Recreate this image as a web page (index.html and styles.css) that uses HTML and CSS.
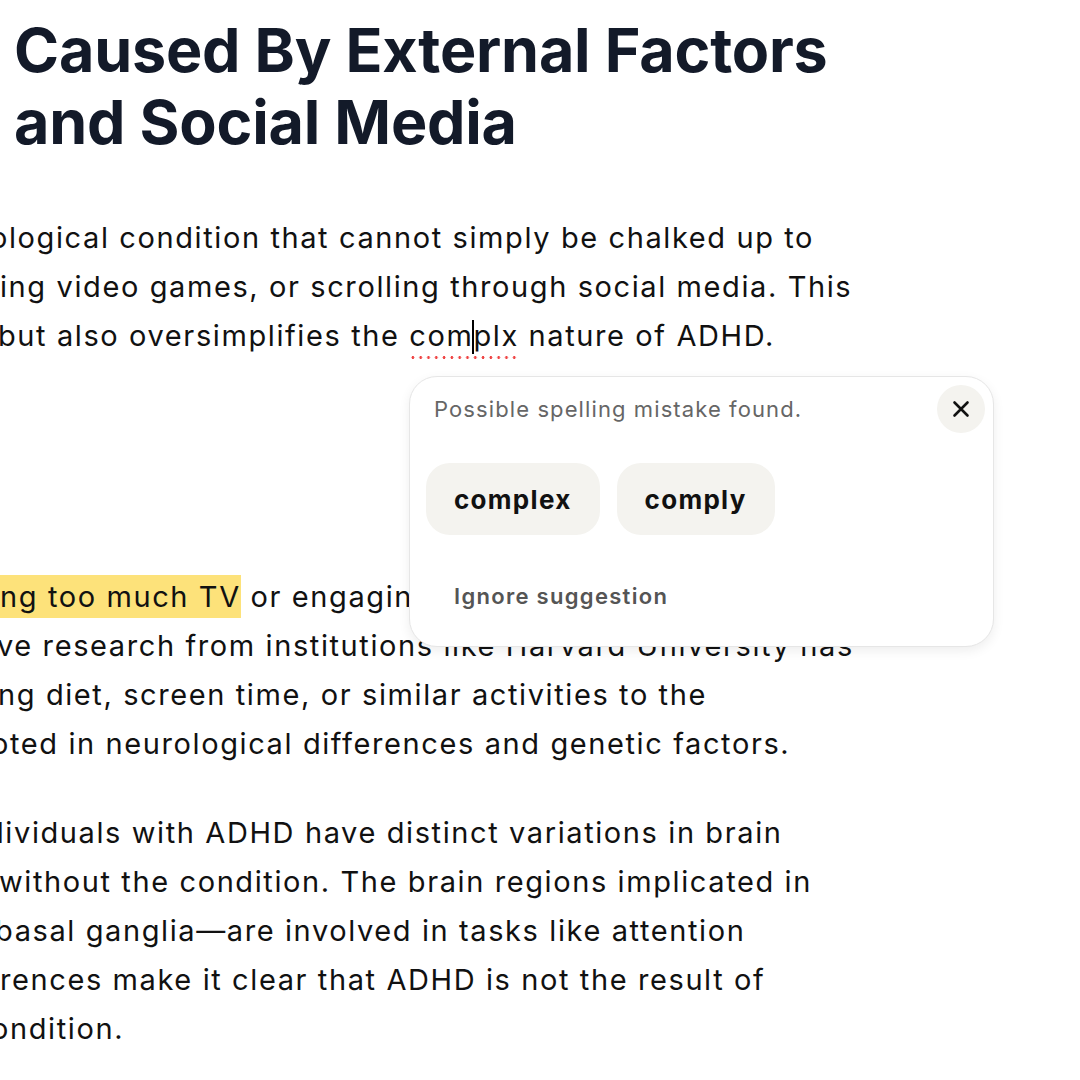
FILE: index.html
```html
<!DOCTYPE html>
<html lang="en">
<head>
<meta charset="utf-8">
<title>Article editor</title>
<link rel="stylesheet" href="styles.css">
</head>
<body>
<main class="page">
  <h1 class="title">Caused By External Factors<br>and Social Media</h1>

  <div class="para para-first">
    <div class="ln s-o">ological condition that cannot simply be chalked up to</div>
    <div class="ln s-i">ing video games, or scrolling through social media. This</div>
    <div class="ln s-b">but also oversimplifies the <span class="typo">com<span class="caret"></span>plx</span> nature of ADHD.</div>
  </div>

  <div class="para">
    <div class="ln s-n"><mark class="hl">ng too much TV</mark> or engaging in other online activities.</div>
    <div class="ln s-v">ve research from institutions like Harvard University has</div>
    <div class="ln s-n2">ng diet, screen time, or similar activities to the</div>
    <div class="ln s-o2">oted in neurological differences and genetic factors.</div>
  </div>

  <div class="para">
    <div class="ln s-d">dividuals with ADHD have distinct variations in brain</div>
    <div class="ln s-w">without the condition. The brain regions implicated in</div>
    <div class="ln s-b2">basal ganglia—are involved in tasks like attention</div>
    <div class="ln s-r">rences make it clear that ADHD is not the result of</div>
    <div class="ln s-o3">ondition.</div>
  </div>

  <section class="popup" role="dialog" aria-label="Spelling suggestion">
    <div class="popup-head">
      <p class="popup-msg">Possible spelling mistake found.</p>
      <button class="close" aria-label="Close">
        <svg width="18" height="18" viewBox="0 0 18 18" aria-hidden="true"><path d="M2.5 2.5 L15.5 15.5 M15.5 2.5 L2.5 15.5" stroke="#111" stroke-width="2.6" stroke-linecap="round" fill="none"/></svg>
      </button>
    </div>
    <div class="suggestions">
      <button class="chip">complex</button>
      <button class="chip">comply</button>
    </div>
    <button class="ignore">Ignore suggestion</button>
  </section>
</main>
</body>
</html>
```
FILE: styles.css
```css
html, body {
  margin: 0;
  padding: 0;
  background: #ffffff;
}
body {
  width: 1080px;
  height: 1080px;
  overflow: hidden;
  font-family: Inter, "Noto Sans", sans-serif;
}
.page {
  position: relative;
  padding-top: 14px;
}
.title {
  margin: 0;
  padding-left: 14px;
  font-size: 61px;
  line-height: 72px;
  font-weight: 700;
  color: #131a29;
  letter-spacing: -0.2px;
  white-space: nowrap;
}
.para {
  margin: 0 0 40px 0;
  font-size: 29px;
  line-height: 49px;
  letter-spacing: 1.6px;
  color: #111111;
}
.para-first {
  margin-top: 55px;
  margin-bottom: 212px;
}
.ln {
  white-space: nowrap;
}
.s-o { margin-left: -10px; }
.s-i { margin-left: 0; }
.s-b { margin-left: -2px; }
.s-n { margin-left: 0; }
.s-v { margin-left: -3px; }
.s-n2 { margin-left: -2px; }
.s-o2 { margin-left: -9px; }
.s-d { margin-left: -14px; }
.s-w { margin-left: -1px; }
.s-b2 { margin-left: -5px; }
.s-r { margin-left: 0; }
.s-o3 { margin-left: -9px; }

.hl {
  background: #fde27a;
  color: inherit;
  padding: 4px 0;
}
.typo {
  position: relative;
}
.typo::after {
  content: "";
  position: absolute;
  left: 0;
  right: 0;
  bottom: -6px;
  height: 3px;
  background-image: radial-gradient(circle, #ef4444 1.3px, transparent 1.6px);
  background-size: 7.8px 3px;
  background-repeat: repeat-x;
}
.caret {
  display: inline-block;
  width: 2px;
  height: 34px;
  margin: 0 -1px;
  background: #000;
  vertical-align: -8px;
}

.popup {
  position: absolute;
  left: 409px;
  top: 376px;
  width: 585px;
  height: 271px;
  box-sizing: border-box;
  border: 1px solid #e6e6e6;
  border-radius: 28px;
  background: #ffffff;
  box-shadow: 0 4px 12px rgba(0, 0, 0, 0.07);
  padding: 8px 8px 12px 16px;
  display: flex;
  flex-direction: column;
}
.popup-head {
  display: flex;
  align-items: center;
  justify-content: space-between;
}
.popup-msg {
  margin: 0 0 0 8px;
  font-size: 22px;
  letter-spacing: 1.1px;
  color: #666666;
  font-weight: 400;
}
.close {
  width: 48px;
  height: 48px;
  border: 0;
  border-radius: 50%;
  background: #f4f3ef;
  display: flex;
  align-items: center;
  justify-content: center;
  padding: 0;
}
.suggestions {
  display: flex;
  gap: 17px;
  margin-top: 30px;
}
.chip, .ignore {
  font-family: Inter, "Noto Sans", sans-serif;
  border: 0;
  height: 72px;
  padding: 0 28px;
  border-radius: 24px;
}
.chip {
  background: #f4f3ef;
  font-size: 26px;
  letter-spacing: 1.3px;
  font-weight: 700;
  color: #111111;
}
.ignore {
  align-self: flex-start;
  margin-top: 25px;
  background: transparent;
  font-size: 22px;
  letter-spacing: 1.3px;
  font-weight: 600;
  color: #555555;
}
```
